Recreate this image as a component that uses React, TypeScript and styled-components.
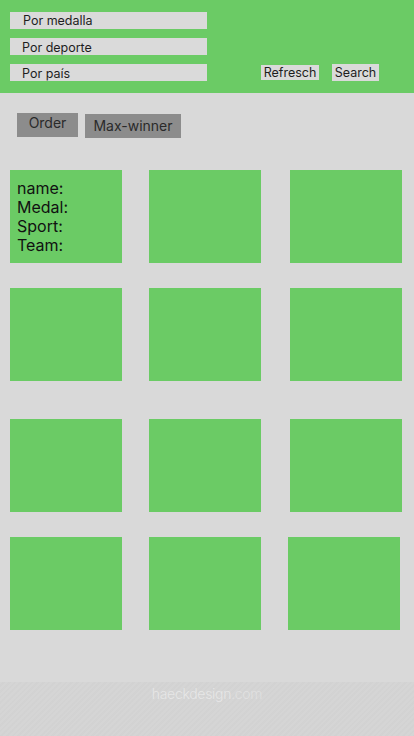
import React from "react";
import styled, { createGlobalStyle } from "styled-components";

const Global = createGlobalStyle`
  html, body { margin: 0; padding: 0; }
  body { font-family: Inter, "Noto Sans", sans-serif; background: #d9d9d9; }
  * { box-sizing: border-box; }
`;

const Page = styled.div`
  min-height: 736px;
  display: flex;
  flex-direction: column;
  background: #d9d9d9;
`;

const Header = styled.header`
  height: 93px;
  background: #6bcb65;
  display: flex;
  padding: 12px 0 12px 10px;
`;

const Filters = styled.div`
  display: flex;
  flex-direction: column;
  gap: 9px;
`;

const FilterInput = styled.div<{ $indent: number; $pt: number }>`
  width: 197px;
  height: 17px;
  background: #dadada;
  color: #1e1e1e;
  font-size: 12.5px;
  line-height: 17px;
  padding-left: ${(p) => p.$indent}px;
  padding-top: ${(p) => p.$pt}px;
`;

const Actions = styled.div`
  display: flex;
  align-items: flex-end;
  gap: 13px;
  margin-left: 54px;
`;

const HeadButton = styled.div<{ $w: number; $h: number; $b: number }>`
  width: ${(p) => p.$w}px;
  height: ${(p) => p.$h}px;
  margin-bottom: ${(p) => p.$b}px;
  background: #dadada;
  color: #1e1e1e;
  font-size: 12.5px;
  line-height: ${(p) => p.$h}px;
  text-align: center;
`;

const Main = styled.main`
  flex: 1;
  padding-top: 20px;
`;

const Toolbar = styled.div`
  display: flex;
  align-items: flex-start;
  gap: 7px;
  padding-left: 17px;
`;

const GrayButton = styled.div<{ $w: number; $h: number; $top: number; $pt: number }>`
  width: ${(p) => p.$w}px;
  height: ${(p) => p.$h}px;
  margin-top: ${(p) => p.$top}px;
  padding-top: ${(p) => p.$pt}px;
  background: #8c8c8c;
  color: #2a2a2a;
  font-size: 14px;
  line-height: 16px;
  text-align: center;
`;

const Row = styled.div<{ $top: number }>`
  display: flex;
  padding-left: 10px;
  margin-top: ${(p) => p.$top}px;
`;

const Card = styled.div<{ $left: number }>`
  width: 112px;
  height: 93px;
  margin-left: ${(p) => p.$left}px;
  background: #6bcb65;
  padding: 9px 0 0 7px;
  color: #111;
  font-size: 16px;
  line-height: 19px;
`;

const Footer = styled.footer`
  height: 54px;
  background-color: #d4d4d4;
  background-image: repeating-linear-gradient(
    135deg,
    rgba(255, 255, 255, 0.03) 0px,
    rgba(255, 255, 255, 0.03) 2px,
    rgba(0, 0, 0, 0.008) 2px,
    rgba(0, 0, 0, 0.008) 4px
  );
  display: flex;
  justify-content: center;
  padding-top: 3px;
`;

const Brand = styled.div`
  font-size: 14px;
  font-weight: 300;
  letter-spacing: -0.3px;
  color: rgba(255, 255, 255, 0.45);
  line-height: 18px;
`;

const Dim = styled.span`
  color: rgba(255, 255, 255, 0.3);
`;

const rows: { top: number; lefts: number[] }[] = [
  { top: 32, lefts: [0, 27, 29] },
  { top: 25, lefts: [0, 27, 29] },
  { top: 38, lefts: [0, 27, 29] },
  { top: 25, lefts: [0, 27, 27] },
];

export default function App() {
  return (
    <Page>
      <Global />
      <Header>
        <Filters>
          <FilterInput $indent={13} $pt={0}>Por medalla</FilterInput>
          <FilterInput $indent={12} $pt={1}>Por deporte</FilterInput>
          <FilterInput $indent={12} $pt={1}>Por país</FilterInput>
        </Filters>
        <Actions>
          <HeadButton $w={58} $h={15} $b={1}>Refresch</HeadButton>
          <HeadButton $w={47} $h={17} $b={0}>Search</HeadButton>
        </Actions>
      </Header>
      <Main>
        <Toolbar>
          <GrayButton $w={61} $h={24} $top={0} $pt={2}>Order</GrayButton>
          <GrayButton $w={96} $h={24} $top={1} $pt={4}>Max-winner</GrayButton>
        </Toolbar>
        {rows.map((r, i) => (
          <Row key={i} $top={r.top}>
            {r.lefts.map((l, j) => (
              <Card key={j} $left={l}>
                {i === 0 && j === 0 ? (
                  <>
                    name:<br />Medal:<br />Sport:<br />Team:
                  </>
                ) : null}
              </Card>
            ))}
          </Row>
        ))}
      </Main>
      <Footer>
        <Brand>
          haeckdesign<Dim>.com</Dim>
        </Brand>
      </Footer>
    </Page>
  );
}
